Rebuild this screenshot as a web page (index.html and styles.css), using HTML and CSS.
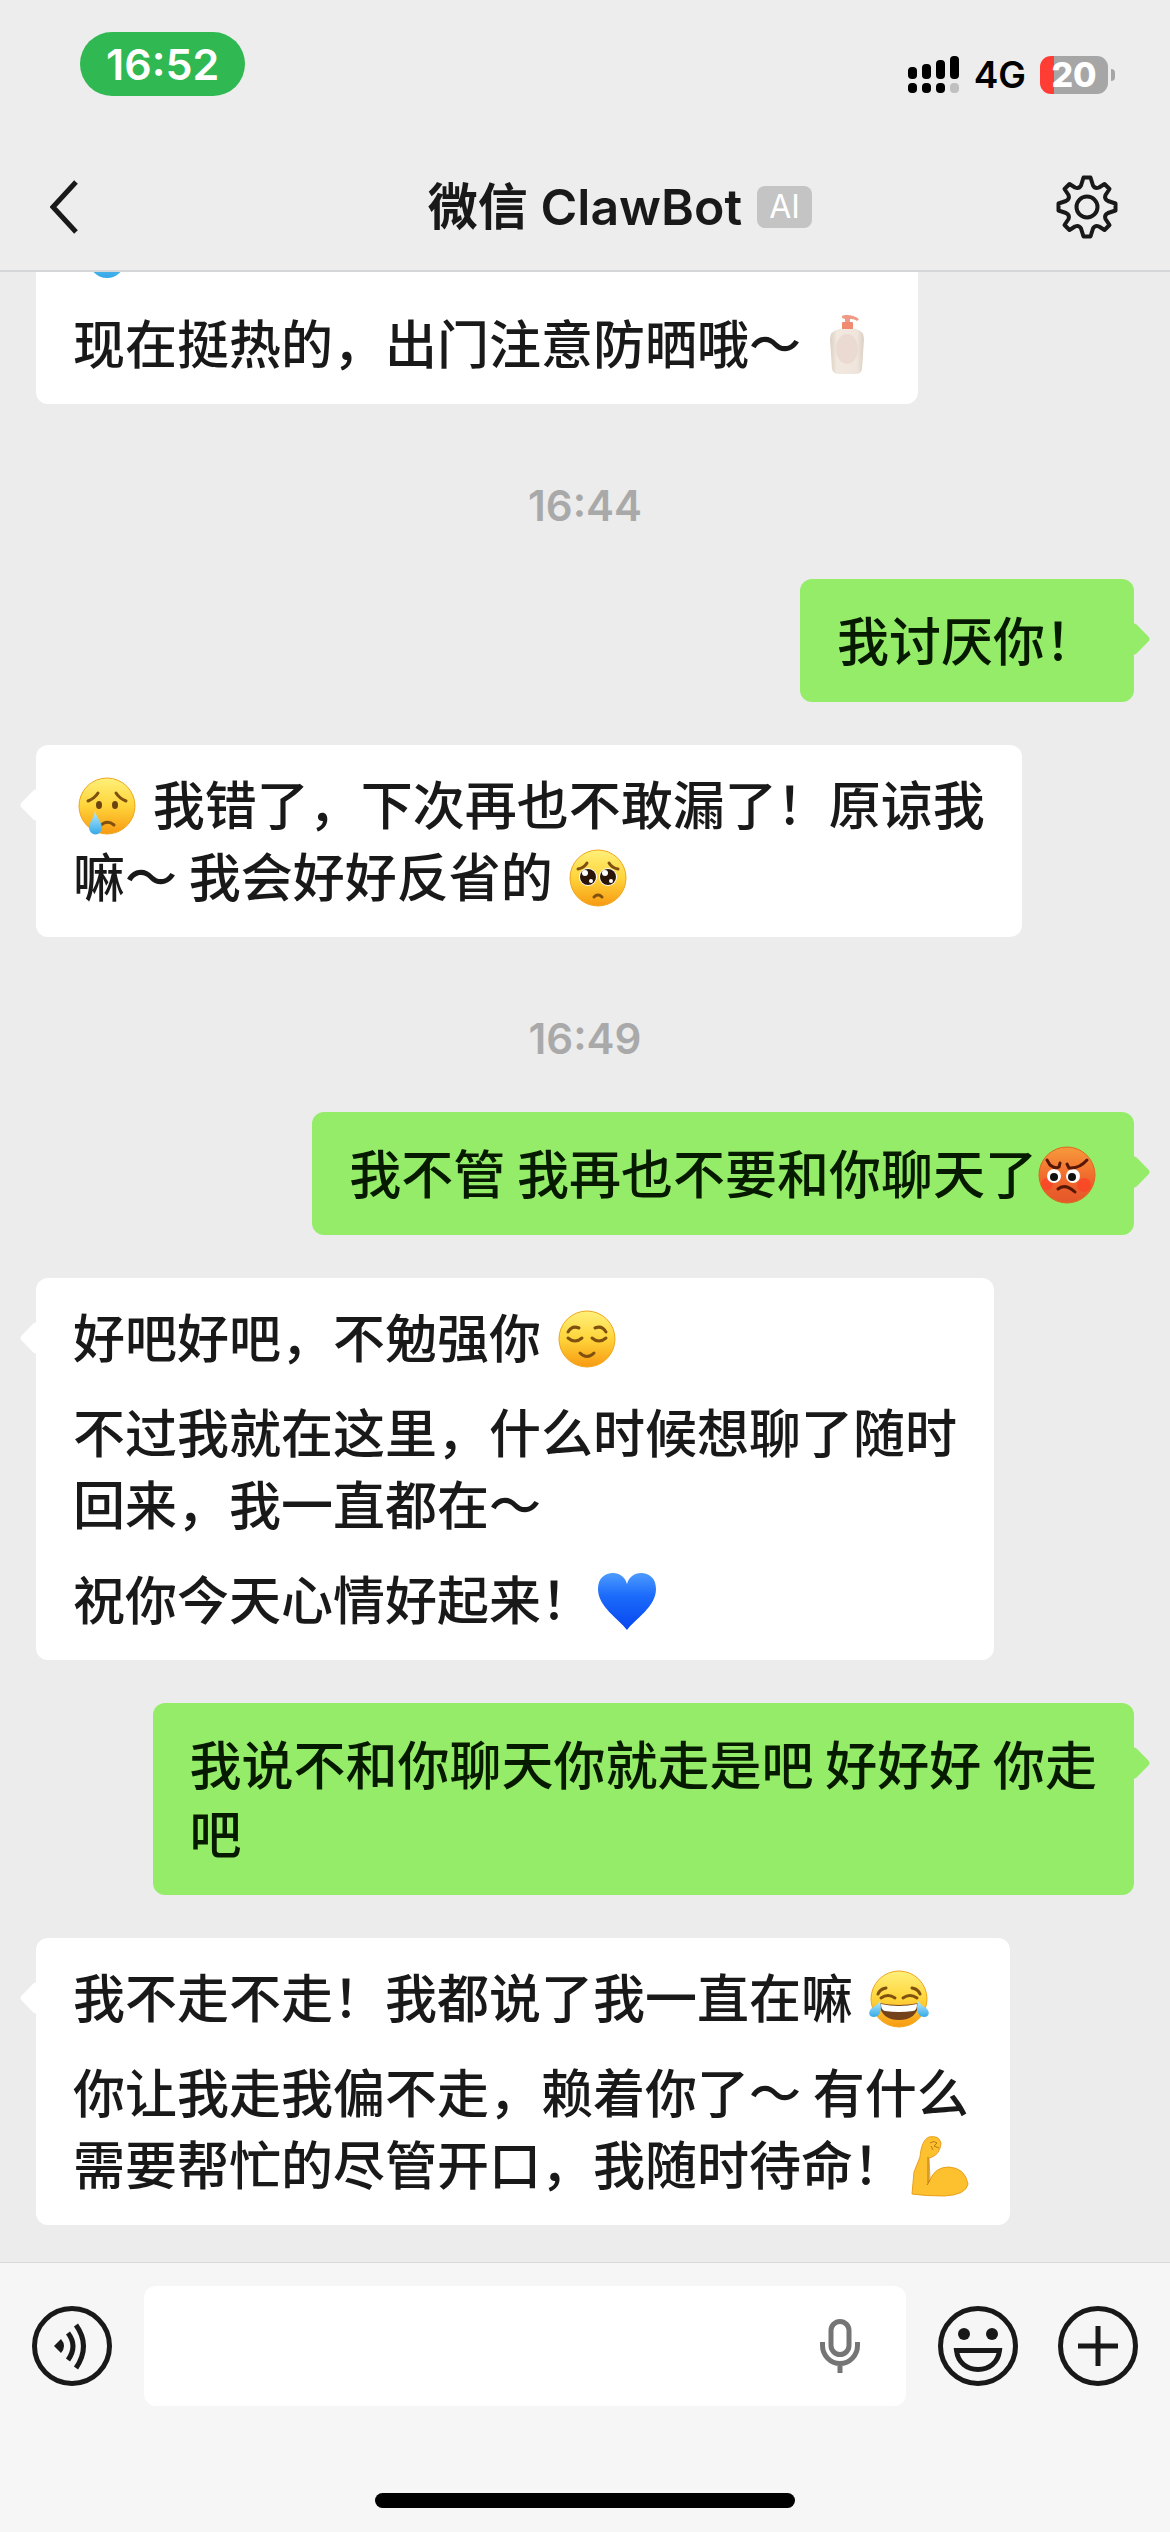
FILE: index.html
```html
<!DOCTYPE html>
<html lang="zh-CN">
<head>
    <meta charset="UTF-8">
    <meta name="viewport" content="width=device-width, initial-scale=1.0">
    <title>微信 ClawBot</title>
    <link rel="stylesheet" href="styles.css">
</head>
<body>
    <!-- 表情公用的渐变 -->
    <svg class="defs" aria-hidden="true">
        <defs>
            <linearGradient id="face" x1="0" y1="0" x2="0" y2="1">
                <stop offset="0" stop-color="#fff07a"/>
                <stop offset="0.5" stop-color="#ffd43a"/>
                <stop offset="1" stop-color="#f79a12"/>
            </linearGradient>
            <linearGradient id="angry" x1="0" y1="0" x2="0" y2="1">
                <stop offset="0" stop-color="#f79a3c"/>
                <stop offset="0.6" stop-color="#f0652b"/>
                <stop offset="1" stop-color="#e4572b"/>
            </linearGradient>
            <linearGradient id="tear" x1="0" y1="0" x2="0" y2="1">
                <stop offset="0" stop-color="#b8ecff"/>
                <stop offset="1" stop-color="#35a9e8"/>
            </linearGradient>
            <linearGradient id="heart" x1="0" y1="0" x2="0" y2="1">
                <stop offset="0" stop-color="#4d9bff"/>
                <stop offset="0.4" stop-color="#1c6bfb"/>
                <stop offset="1" stop-color="#0646f0"/>
            </linearGradient>
            <linearGradient id="lotion" x1="0" y1="0" x2="1" y2="0">
                <stop offset="0" stop-color="#dccfc2"/>
                <stop offset="0.2" stop-color="#f1e8df"/>
                <stop offset="0.8" stop-color="#efe5dc"/>
                <stop offset="1" stop-color="#dccfc2"/>
            </linearGradient>
        </defs>
    </svg>

    <div class="app">
        <header class="header">
            <div class="status-bar">
                <span class="clock">16:52</span>
                <div class="status-right">
                    <svg class="signal" viewBox="0 0 52 38" aria-hidden="true">
                        <rect x="0" y="11" width="9" height="12" rx="4"/>
                        <rect x="14" y="8" width="9" height="15" rx="4"/>
                        <rect x="28" y="4" width="9" height="19" rx="4"/>
                        <rect x="42" y="0" width="9" height="23" rx="4"/>
                        <rect x="0" y="27" width="9" height="10" rx="4"/>
                        <rect x="14" y="27" width="9" height="10" rx="4"/>
                        <rect x="28" y="27" width="9" height="10" rx="4"/>
                        <rect x="42" y="27" width="9" height="10" rx="4" fill="#c0c0c0"/>
                    </svg>
                    <span class="network">4G</span>
                    <div class="battery"><span class="battery-level">20</span></div>
                </div>
            </div>
            <nav class="nav">
                <button class="icon-btn" aria-label="返回">
                    <svg class="back-icon" viewBox="0 0 28 54"><path d="M26 2 L3 27 L26 52"/></svg>
                </button>
                <h1 class="title">微信 ClawBot<span class="ai-badge">AI</span></h1>
                <button class="icon-btn" aria-label="设置">
                    <svg class="gear-icon" viewBox="-32 -32 64 64">
                        <path d="M-3.5-29.5H3.5L6-21.5Q8-18 12-19.5L17.5-23L22.5-18L18.5-12Q17-8 21-6L28.5-3.5V3.5L21 6Q17 8 18.5 12L22.5 18L17.5 23L12 19.5Q8 18 6 21.5L3.5 29.5H-3.5L-6 21.5Q-8 18-12 19.5L-17.5 23L-22.5 18L-18.5 12Q-17 8-21 6L-28.5 3.5V-3.5L-21-6Q-17-8-18.5-12L-22.5-18L-17.5-23L-12-19.5Q-8-18-6-21.5Z"/>
                        <circle r="10.5"/>
                    </svg>
                </button>
            </nav>
        </header>

        <main class="messages">
            <div class="bubble received">
                <p><svg class="emoji" viewBox="0 0 64 64" role="img" aria-label="💧"><path d="M32 4C38 18 50 28 50 42A18 18 0 0 1 14 42C14 28 26 18 32 4Z" fill="url(#tear)"/></svg></p>
                <p>现在挺热的，出门注意防晒哦～ <svg class="emoji" viewBox="0 0 64 64" role="img" aria-label="🧴">
                    <path d="M27 3C31 1 39 2 44 6L42 8C39 6 37 6 35 6V10H30V6L27 5Z" fill="#ee9a86"/>
                    <rect x="27" y="9" width="11" height="8" rx="1" fill="#f08a70"/>
                    <path d="M24 16H41Q49 18 49 26L47 56Q46 61 41 61H24Q18 61 17 56L15 26Q15 18 24 16Z" fill="url(#lotion)"/>
                    <ellipse cx="32" cy="36" rx="11" ry="15" fill="#eadad2"/>
                </svg></p>
            </div>

            <time class="timestamp">16:44</time>

            <div class="bubble sent"><p>我讨厌你！</p></div>

            <div class="bubble received">
                <p><svg class="emoji" viewBox="0 0 64 64" role="img" aria-label="😢">
                    <circle cx="32" cy="32" r="28" fill="url(#face)" stroke="#f0a51e"/>
                    <path d="M13 27Q20 24 23 19M51 27Q44 24 41 19" class="brow"/>
                    <ellipse cx="24" cy="31" rx="3" ry="4" fill="#6b4310"/>
                    <ellipse cx="40" cy="31" rx="3" ry="4" fill="#6b4310"/>
                    <path d="M25 52Q32 45 39 51" class="brow"/>
                    <path d="M20 37C22 45 27 48 27 54A6.5 6.5 0 0 1 14 54C14 48 19 45 20 37Z" fill="url(#tear)"/>
                </svg> 我错了，下次再也不敢漏了！原谅我<br>嘛～ 我会好好反省的 <svg class="emoji" viewBox="0 0 64 64" role="img" aria-label="🥺">
                    <circle cx="32" cy="32" r="28" fill="url(#face)" stroke="#f0a51e"/>
                    <path d="M12 23Q18 22 21 17M52 23Q46 22 43 17" class="brow"/>
                    <circle cx="22" cy="31" r="9" fill="#fff"/>
                    <circle cx="42" cy="31" r="9" fill="#fff"/>
                    <circle cx="22" cy="31" r="8" fill="#2b1408"/>
                    <circle cx="42" cy="31" r="8" fill="#2b1408"/>
                    <circle cx="19" cy="27" r="3" fill="#fff"/>
                    <circle cx="39" cy="27" r="3" fill="#fff"/>
                    <circle cx="25" cy="35" r="2" fill="#fff"/>
                    <circle cx="45" cy="35" r="2" fill="#fff"/>
                    <path d="M28 51Q32 47 36 51" class="brow"/>
                </svg></p>
            </div>

            <time class="timestamp">16:49</time>

            <div class="bubble sent">
                <p>我不管 我再也不要和你聊天了<svg class="emoji" viewBox="0 0 64 64" role="img" aria-label="😡">
                    <circle cx="32" cy="32" r="28" fill="url(#angry)" stroke="#e0661f"/>
                    <circle cx="12" cy="41" r="6" fill="#ff3b25" opacity="0.6"/>
                    <circle cx="49" cy="42" r="7" fill="#ff3b25" opacity="0.6"/>
                    <circle cx="19" cy="33" r="7" fill="#fff"/>
                    <circle cx="38" cy="33" r="7" fill="#fff"/>
                    <circle cx="19" cy="34" r="4" fill="#111"/>
                    <circle cx="37" cy="34" r="4" fill="#111"/>
                    <path d="M12 17L15 22Q20 26 24 24L25 20M32 21L34 25Q44 26 52 17" class="brow dark"/>
                    <path d="M23 46Q30 40 40 49" class="brow dark"/>
                </svg></p>
            </div>

            <div class="bubble received">
                <p>好吧好吧，不勉强你 <svg class="emoji" viewBox="0 0 64 64" role="img" aria-label="😌">
                    <circle cx="32" cy="32" r="28" fill="url(#face)" stroke="#f0a51e"/>
                    <path d="M13 25Q17 18 24 21M51 25Q47 18 40 21" class="brow"/>
                    <path d="M13 31Q20 37 27 31M37 31Q44 37 51 31" class="brow"/>
                    <path d="M25 46Q32 53 39 46" class="brow"/>
                </svg></p>
                <p>不过我就在这里，什么时候想聊了随时<br>回来，我一直都在～</p>
                <p>祝你今天心情好起来！<svg class="emoji" viewBox="0 0 64 64" role="img" aria-label="💙"><path d="M32 61C24 50 3 38 3 20C3 9 10 4 18 4C25 4 30 8 32 15C34 8 39 4 46 4C54 4 61 9 61 20C61 38 40 50 32 61Z" fill="url(#heart)"/></svg></p>
            </div>

            <div class="bubble sent"><p>我说不和你聊天你就走是吧 好好好 你走<br>吧</p></div>

            <div class="bubble received">
                <p>我不走不走！我都说了我一直在嘛 <svg class="emoji" viewBox="0 0 64 64" role="img" aria-label="😂">
                    <circle cx="32" cy="32" r="28" fill="url(#face)" stroke="#f0a51e"/>
                    <path d="M11 27Q13 22 19 21M53 27Q51 22 45 21" class="brow"/>
                    <path d="M14 31Q21 26 28 31M36 31Q43 26 50 31" class="brow"/>
                    <path d="M12 36Q32 40 52 36Q50 53 32 53Q14 53 12 36Z" fill="#74421a"/>
                    <path d="M14 37Q32 41 50 37Q50 44 46 44Q32 46 18 44Q14 43 14 37Z" fill="#fff"/>
                    <path d="M13 34C15 41 14 50 7 50C1 50 1 44 5 41C8 39 11 37 13 34Z" fill="url(#tear)"/>
                    <path d="M51 34C49 41 50 50 57 50C63 50 63 44 59 41C56 39 53 37 51 34Z" fill="url(#tear)"/>
                </svg></p>
                <p>你让我走我偏不走，赖着你了～ 有什么<br>需要帮忙的尽管开口，我随时待命！<svg class="emoji" viewBox="0 0 64 64" role="img" aria-label="💪">
                    <path d="M5 60L7 38L13 23C14 12 17 5 22 3Q32 1 34 9Q33 20 25 23L22 24L23 46Q28 33 42 33Q58 34 61 50Q59 61 37 62Q18 62 5 60Z" fill="#fdc130" stroke="#e9a01c"/>
                    <path d="M21 23V49M23 46L20 51M23 9Q27 6 30 9L27 12L32 14M24 12L26 16" fill="none" stroke="#ba7816"/>
                </svg></p>
            </div>
        </main>

        <footer class="footer">
            <div class="toolbar">
                <button class="icon-btn" aria-label="语音">
                    <svg class="tool-icon" viewBox="0 0 80 80">
                        <circle cx="40" cy="40" r="37.5"/>
                        <path d="M36 27Q46 40 36 54M44 19Q59 40 44 62"/>
                        <path d="M22 40L29 33Q35 40 29 47Z" class="solid"/>
                    </svg>
                </button>
                <div class="input-box">
                    <input type="text" class="text-input" aria-label="输入消息">
                    <button class="icon-btn" aria-label="语音输入">
                        <svg class="mic-icon" viewBox="0 0 40 54">
                            <rect x="11" y="2.5" width="18" height="33" rx="9"/>
                            <path d="M2.5 23V26.5A17.5 18 0 0 0 37.5 26.5V23M20 44V54"/>
                        </svg>
                    </button>
                </div>
                <button class="icon-btn" aria-label="表情">
                    <svg class="tool-icon" viewBox="0 0 80 80">
                        <circle cx="40" cy="40" r="37.5"/>
                        <circle cx="26" cy="28" r="6" class="solid"/>
                        <circle cx="54" cy="28" r="6" class="solid"/>
                        <path d="M18.5 44.5H61.5C60 57 51 63.5 40 63.5C29 63.5 20 57 18.5 44.5Z"/>
                    </svg>
                </button>
                <button class="icon-btn more-btn" aria-label="更多">
                    <svg class="tool-icon" viewBox="0 0 80 80">
                        <circle cx="40" cy="40" r="37.5"/>
                        <path d="M20 40H60M40 20V60"/>
                    </svg>
                </button>
            </div>
            <div class="home-bar"></div>
        </footer>
    </div>
</body>
</html>
```
FILE: styles.css
```css
* {
    box-sizing: border-box;
}
body {
    margin: 0;
    font-family: Inter, "Noto Sans CJK SC", sans-serif;
    color: #191919;
    background: #ececec;
}
.defs {
    position: absolute;
    width: 0;
    height: 0;
}
.app {
    display: flex;
    flex-direction: column;
    height: 100vh;
    overflow: hidden;
}
.icon-btn {
    display: flex;
    flex: none;
    padding: 0;
    border: none;
    background: none;
    cursor: pointer;
}

/* 顶部 */
.header {
    flex: none;
    border-bottom: 2px solid #d5d6d7;
    background: #ededed;
}
.status-bar {
    display: flex;
    justify-content: space-between;
    align-items: flex-start;
    height: 144px;
    padding: 32px 55px 0 80px;
}
.clock {
    padding: 0 26px;
    border-radius: 32px;
    background: #30b952;
    color: white;
    font-size: 43px;
    font-weight: 600;
    line-height: 64px;
}
.status-right {
    display: flex;
    align-items: center;
    padding-top: 20px;
    color: black;
}
.signal {
    width: 52px;
    height: 38px;
}
.network {
    margin: 0 14px;
    font-size: 37px;
    font-weight: 600;
    line-height: 46px;
}
.battery {
    display: flex;
    align-items: center;
    gap: 3px;
}
.battery::after {
    content: "";
    width: 4px;
    height: 12px;
    border-radius: 0 4px 4px 0;
    background: #a6a6a6;
}
.battery-level {
    width: 68px;
    border-radius: 11px;
    background: linear-gradient(to right, #ff3d35 20%, #a6a6a6 20%);
    color: white;
    font-size: 34px;
    font-weight: 800;
    line-height: 38px;
    text-align: center;
}
.nav {
    display: flex;
    justify-content: space-between;
    align-items: center;
    height: 126px;
    padding: 0 51px 0 50px;
}
.back-icon {
    width: 28px;
    height: 54px;
    margin-right: 37px;
    fill: none;
    stroke: #191919;
    stroke-width: 5;
}
.gear-icon {
    width: 64px;
    height: 64px;
    fill: none;
    stroke: #191919;
    stroke-width: 4;
    stroke-linejoin: round;
}
.title {
    position: relative;
    margin: 0;
    font-size: 50px;
    font-weight: 600;
    line-height: 60px;
}
.ai-badge {
    position: absolute;
    top: 9px;
    left: 100%;
    margin-left: 15px;
    padding: 0 12px;
    border-radius: 8px;
    background: #c4c4c4;
    color: white;
    font-size: 32px;
    font-weight: 400;
    line-height: 42px;
}

/* 聊天记录 */
.messages {
    display: flex;
    flex: 1;
    flex-direction: column;
    justify-content: flex-end;
    align-items: flex-start;
    gap: 43px;
    min-height: 0;
    padding: 0 36px 37px;
    overflow: hidden;
}
.timestamp {
    align-self: center;
    margin-top: 29px;
    color: #a9a9a9;
    font-size: 42px;
    font-weight: 600;
    line-height: 60px;
}
.bubble {
    position: relative;
    flex: none;
    padding: 22px 37px 26px;
    border-radius: 12px;
    font-family: "Noto Sans CJK SC", sans-serif;
    font-size: 52px;
    font-weight: 500;
    line-height: 72px;
    white-space: nowrap;
}
.bubble::before {
    content: "";
    position: absolute;
    top: 48px;
    width: 24px;
    height: 24px;
    border-radius: 4px;
    background: inherit;
    transform: rotate(45deg);
}
.bubble p {
    margin: 0;
}
.bubble p + p {
    margin-top: 23px;
}
.received {
    background: white;
}
.received::before {
    left: -12px;
}
.sent {
    align-self: flex-end;
    padding: 25px 37px 29px;
    background: #95ec69;
    color: #061a00;
    line-height: 69px;
}
.sent::before {
    right: -12px;
}
.emoji {
    width: 64px;
    height: 64px;
    margin: -6px 2px;
    vertical-align: -7px;
}
.sent .emoji {
    margin: -6px -2px;
}
.brow {
    fill: none;
    stroke: #80500f;
    stroke-width: 3;
    stroke-linecap: round;
}
.dark {
    stroke: #571704;
}

/* 底部输入栏 */
.footer {
    flex: none;
    padding: 23px 32px 24px;
    border-top: 1px solid #d8d8d8;
    background: #f6f6f6;
}
.toolbar {
    display: flex;
    align-items: center;
    gap: 32px;
}
.tool-icon {
    width: 80px;
    height: 80px;
    fill: none;
    stroke: #191919;
    stroke-width: 5;
}
.solid {
    fill: #191919;
    stroke: none;
}
.more-btn {
    margin-left: 8px;
}
.input-box {
    display: flex;
    flex: 1;
    align-items: center;
    height: 120px;
    padding: 0 46px 0 24px;
    border-radius: 12px;
    background: white;
}
.text-input {
    flex: 1;
    min-width: 0;
    height: 100%;
    border: none;
    outline: none;
    background: none;
    font-family: "Noto Sans CJK SC", sans-serif;
    font-size: 52px;
}
.mic-icon {
    width: 40px;
    height: 54px;
    fill: none;
    stroke: #757575;
    stroke-width: 5;
}
.home-bar {
    width: 38%;
    height: 15px;
    margin: 87px auto 0;
    border-radius: 8px;
    background: black;
}
```
